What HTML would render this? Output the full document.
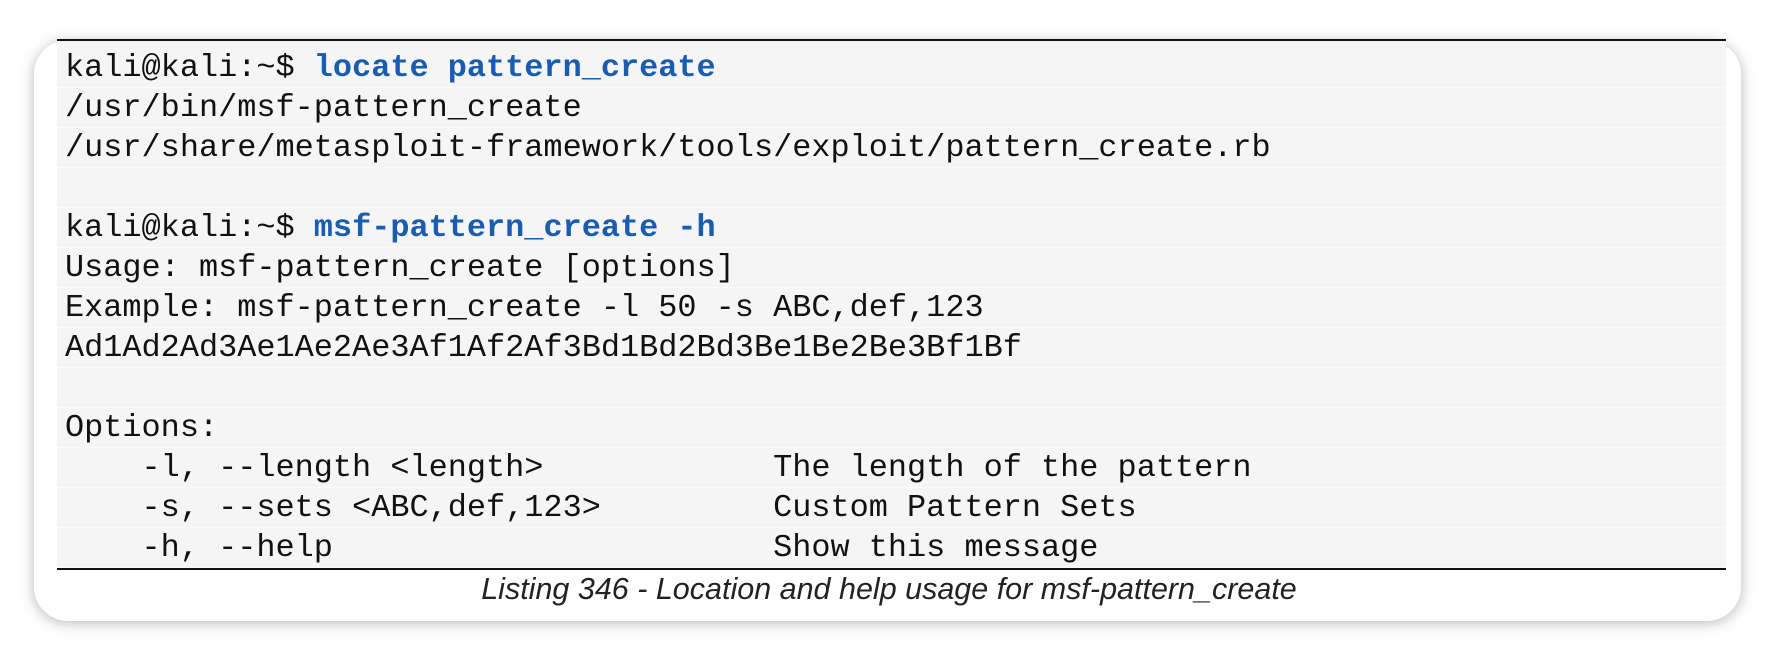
<!DOCTYPE html>
<html><head><meta charset="utf-8"><style>
html,body{margin:0;padding:0;background:#fff;width:1778px;height:656px;overflow:hidden}
.card{position:absolute;left:34px;top:40px;width:1707px;height:581px;background:#fff;border-radius:34px;box-shadow:0 2px 14px rgba(0,0,0,.28)}
.code{position:absolute;left:57px;top:39px;width:1669px;height:527px;border-top:2px solid #111;border-bottom:2px solid #111;background:#f5f5f5;padding-top:7px;box-sizing:content-box;height:520px}
.row{height:40px;line-height:40px;border-bottom:1px solid #fbfbfb;box-sizing:border-box;padding-left:8px;font-family:"Liberation Mono",monospace;font-size:31.9px;color:#111;white-space:pre}
.b{color:#1a5cb0;font-weight:bold}
.cap{position:absolute;left:0;width:1778px;top:572px;text-align:center;font-family:"Liberation Sans",sans-serif;font-style:italic;font-size:30.5px;color:#222}
</style></head><body>
<div class="card"></div>
<div class="code">
<div class="row">kali@kali:~$ <span class="b">locate pattern_create</span></div>
<div class="row">/usr/bin/msf-pattern_create</div>
<div class="row">/usr/share/metasploit-framework/tools/exploit/pattern_create.rb</div>
<div class="row"> </div>
<div class="row">kali@kali:~$ <span class="b">msf-pattern_create -h</span></div>
<div class="row">Usage: msf-pattern_create [options]</div>
<div class="row">Example: msf-pattern_create -l 50 -s ABC,def,123</div>
<div class="row">Ad1Ad2Ad3Ae1Ae2Ae3Af1Af2Af3Bd1Bd2Bd3Be1Be2Be3Bf1Bf</div>
<div class="row"> </div>
<div class="row">Options:</div>
<div class="row">    -l, --length &lt;length&gt;            The length of the pattern</div>
<div class="row">    -s, --sets &lt;ABC,def,123&gt;         Custom Pattern Sets</div>
<div class="row">    -h, --help                       Show this message</div>
</div>
<div class="cap">Listing 346 - Location and help usage for msf-pattern_create</div>
</body></html>
